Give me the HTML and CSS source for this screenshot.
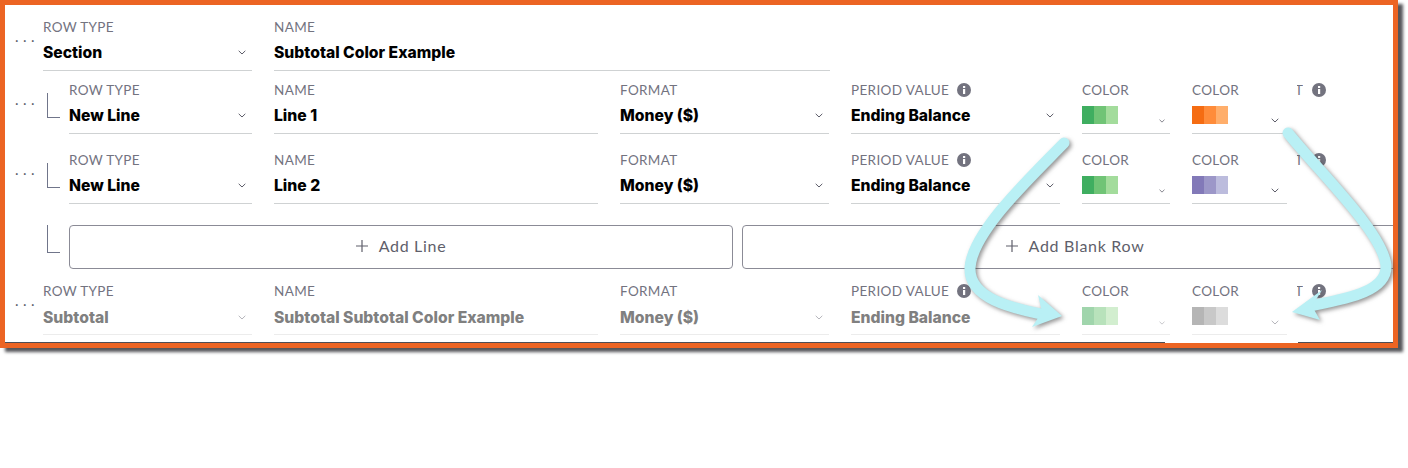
FILE: index.html
```html
<!DOCTYPE html>
<html lang="en">
<head>
<meta charset="utf-8">
<title>Subtotal Color Example</title>
<link rel="stylesheet" href="styles.css">
</head>
<body>
<svg width="0" height="0" class="defs" aria-hidden="true">
  <symbol id="chev" viewBox="0 0 8 5"><path d="M.7.8 4 4 7.3.8" fill="none" stroke="currentColor" stroke-width="1"/></symbol>
  <symbol id="info" viewBox="0 0 14 14"><circle cx="7" cy="7" r="7" fill="#73737f"/><rect x="6" y="6" width="2.2" height="5" fill="#fff"/><rect x="6" y="3" width="2.2" height="2" fill="#fff"/></symbol>
</svg>
<main class="frame">
  <section class="row row-first">
    <div class="handle">...</div>
    <div class="field type type-wide"><span class="label">ROW TYPE</span><div class="value"><b>Section</b><svg class="chev"><use href="#chev"/></svg></div></div>
    <div class="field name-wide"><span class="label">NAME</span><div class="value"><b>Subtotal Color Example</b></div></div>
  </section>
  <section class="row row-second">
    <div class="handle">...</div><div class="tree"></div>
    <div class="field type"><span class="label">ROW TYPE</span><div class="value"><b>New Line</b><svg class="chev"><use href="#chev"/></svg></div></div>
    <div class="field name"><span class="label">NAME</span><div class="value"><b>Line 1</b></div></div>
    <div class="field format"><span class="label">FORMAT</span><div class="value"><b>Money ($)</b><svg class="chev"><use href="#chev"/></svg></div></div>
    <div class="field period"><span class="label">PERIOD VALUE <svg class="info"><use href="#info"/></svg></span><div class="value"><b>Ending Balance</b><svg class="chev"><use href="#chev"/></svg></div></div>
    <div class="field color-a"><span class="label">COLOR</span><div class="value"><i class="swatch"><u class="g1"></u><u class="g2"></u><u class="g3"></u></i><svg class="chev chev-tiny"><use href="#chev"/></svg></div></div>
    <div class="field color-b"><span class="label">COLOR</span><div class="value"><i class="swatch"><u class="o1"></u><u class="o2"></u><u class="o3"></u></i><svg class="chev chev-low"><use href="#chev"/></svg></div></div>
    <div class="cut"><span class="cut-t">T</span><svg class="info"><use href="#info"/></svg></div>
  </section>
  <section class="row row-third">
    <div class="handle">...</div><div class="tree"></div>
    <div class="field type"><span class="label">ROW TYPE</span><div class="value"><b>New Line</b><svg class="chev"><use href="#chev"/></svg></div></div>
    <div class="field name"><span class="label">NAME</span><div class="value"><b>Line 2</b></div></div>
    <div class="field format"><span class="label">FORMAT</span><div class="value"><b>Money ($)</b><svg class="chev"><use href="#chev"/></svg></div></div>
    <div class="field period"><span class="label">PERIOD VALUE <svg class="info"><use href="#info"/></svg></span><div class="value"><b>Ending Balance</b><svg class="chev"><use href="#chev"/></svg></div></div>
    <div class="field color-a"><span class="label">COLOR</span><div class="value"><i class="swatch"><u class="g1"></u><u class="g2"></u><u class="g3"></u></i><svg class="chev chev-tiny"><use href="#chev"/></svg></div></div>
    <div class="field color-b"><span class="label">COLOR</span><div class="value"><i class="swatch"><u class="p1"></u><u class="p2"></u><u class="p3"></u></i><svg class="chev chev-low"><use href="#chev"/></svg></div></div>
    <div class="cut"><span class="cut-t">T</span><svg class="info"><use href="#info"/></svg></div>
  </section>
  <section class="row row-buttons">
    <div class="tree tree-btn"></div>
    <button class="add add-line"><svg class="plus" viewBox="0 0 12 12"><path d="M6 0v12M0 6h12" stroke="#5f5f6b" stroke-width="1.2"/></svg>Add Line</button>
    <button class="add add-blank"><svg class="plus" viewBox="0 0 12 12"><path d="M6 0v12M0 6h12" stroke="#5f5f6b" stroke-width="1.2"/></svg>Add Blank Row</button>
  </section>
  <section class="row row-last muted">
    <div class="handle">...</div>
    <div class="field type type-wide"><span class="label">ROW TYPE</span><div class="value"><b>Subtotal</b><svg class="chev"><use href="#chev"/></svg></div></div>
    <div class="field name"><span class="label">NAME</span><div class="value"><b>Subtotal Subtotal Color Example</b></div></div>
    <div class="field format"><span class="label">FORMAT</span><div class="value"><b>Money ($)</b><svg class="chev"><use href="#chev"/></svg></div></div>
    <div class="field period"><span class="label">PERIOD VALUE <svg class="info"><use href="#info"/></svg></span><div class="value"><b>Ending Balance</b></div></div>
    <div class="field color-a"><span class="label">COLOR</span><div class="value"><i class="swatch"><u class="mg1"></u><u class="mg2"></u><u class="mg3"></u></i><svg class="chev chev-tiny"><use href="#chev"/></svg></div></div>
    <div class="field color-b"><span class="label">COLOR</span><div class="value"><i class="swatch"><u class="k1"></u><u class="k2"></u><u class="k3"></u></i><svg class="chev chev-low"><use href="#chev"/></svg></div></div>
    <div class="cut"><span class="cut-t">T</span><svg class="info"><use href="#info"/></svg></div>
  </section>
  <div class="edge"><span class="edge-notch"></span></div>
  <svg class="arrows" viewBox="0 0 1408 468" width="1408" height="468" aria-hidden="true">
    <g class="arrow">
      <path d="M1064 143C1030 178 972 232 970 268C969 298 1010 308 1046 315" fill="none" stroke="#b9f0f5" stroke-width="11" stroke-linecap="round"/>
      <path d="M1062 316 1038 295 1042 312 1032 327Z" fill="#b9f0f5"/>
    </g>
    <g class="arrow">
      <path d="M1288 133C1322 175 1382 232 1386 265C1388 292 1345 299 1310 306" fill="none" stroke="#b9f0f5" stroke-width="11" stroke-linecap="round"/>
      <path d="M1292 312 1322 290 1312 306 1320 320Z" fill="#b9f0f5"/>
    </g>
  </svg>
</main>
</body>
</html>
```
FILE: styles.css
```css
* { box-sizing: border-box; }
html, body { margin: 0; padding: 0; background: #fff; }
body { height: 468px; overflow: hidden; font-family: "Lato", "Liberation Sans", sans-serif; }
.defs { position: absolute; }

.frame {
  position: relative;
  width: 1398px;
  height: 348px;
  border: 5px solid #ec6423;
  background: #fff;
  box-shadow: 5px 4px 3px #55565a;
  padding-top: 13px;
}

.row { display: flex; align-items: flex-start; padding-left: 10px; height: 53px; }
.row-second { margin-top: 10px; }
.row-third { margin-top: 17px; }
.row-buttons { margin-top: 21px; height: 44px; overflow: hidden; width: 1388px; }
.row-last { margin-top: 13px; }

.handle {
  width: 28px;
  flex: none;
  padding-top: 8px;
  font-size: 15px;
  line-height: 20px;
  letter-spacing: 4.4px;
  white-space: nowrap;
  color: #5e5e6a;
  font-weight: 400;
}
.tree {
  flex: none;
  width: 13px;
  height: 25px;
  margin: 12px 9px 0 4px;
  border-left: 1px solid #70758a;
  border-bottom: 1px solid #70758a;
}
.tree-btn { margin-left: 32px; margin-top: 0; height: 28px; }

.field { flex: none; margin-right: 22px; border-bottom: 1px solid #cfd2d3; height: 53px; }
.type { width: 183px; }
.type-wide { width: 209px; }
.name { width: 324px; }
.name-wide { width: 556px; }
.format { width: 209px; }
.period { width: 209px; }
.color-a { width: 88px; }
.color-b { width: 95px; margin-right: 10px; }

.label {
  display: flex;
  align-items: center;
  gap: 8px;
  height: 18px;
  font-size: 13.5px;
  line-height: 18px;
  letter-spacing: .35px;
  color: #73737f;
}
.value {
  position: relative;
  display: flex;
  justify-content: space-between;
  align-items: center;
  height: 35px;
  padding: 0 6px 2px 0;
}
.muted .value { padding-bottom: 0; }
.value b { font-family: "Inter", "Lato", sans-serif; font-size: 15.7px; font-weight: 800; color: #000; letter-spacing: 0; white-space: nowrap; }

.chev { display: block; width: 8px; height: 5px; color: #5c5c68; flex: none; }
.chev-tiny { width: 6px; height: 4px; margin-top: 10px; margin-right: -1px; }
.chev-low { margin-top: 10px; margin-right: 2px; }

.info { display: block; width: 14px; height: 14px; flex: none; }

.swatch { display: flex; align-self: flex-start; margin-top: 7px; }
.swatch u { display: block; width: 12px; height: 18px; }
.g1 { background: #3fae60; } .g2 { background: #70c476; } .g3 { background: #a3dc9c; }
.o1 { background: #f56c12; } .o2 { background: #ff8c3a; } .o3 { background: #ffae6b; }
.p1 { background: #8279b8; } .p2 { background: #9c97c8; } .p3 { background: #bcbcdd; }
.mg1 { background: #a0d5ac; } .mg2 { background: #b8e2bb; } .mg3 { background: #d2eecf; }
.k1 { background: #b5b5b5; } .k2 { background: #c8c8c8; } .k3 { background: #dcdcdc; }

.cut { display: flex; align-items: center; height: 18px; }
.cut-t {
  width: 6px;
  margin-right: 9px;
  overflow: hidden;
  font-size: 13.5px;
  line-height: 18px;
  color: #73737f;
  text-indent: -2px;
}

.add {
  flex: none;
  display: flex;
  align-items: center;
  justify-content: center;
  gap: 11px;
  height: 44px;
  border: 1px solid #8b8b96;
  border-radius: 4px;
  background: #fff;
  font: 400 16px/1 "Lato", "Liberation Sans", sans-serif;
  letter-spacing: .7px;
  color: #5f5f6b;
  padding: 0 0 2px;
}
.add-line { width: 664px; margin-right: 9px; }
.add-blank { width: 686px; margin-right: 0; padding-right: 20px; }
.plus { width: 12px; height: 12px; display: block; }

.muted .field { border-bottom-color: #ececec; }
.muted .value b { color: #808080; }
.muted .chev { color: #b5b5bb; }

.edge {
  position: absolute;
  left: 0;
  right: 0;
  bottom: 0;
  height: 1px;
  background: #4b4d55;
}
.edge-notch { position: absolute; left: 1160px; width: 133px; top: 0; height: 1px; background: #fff; }

.arrows { position: absolute; left: -5px; top: -5px; overflow: visible; pointer-events: none; }
.arrow { filter: drop-shadow(2px 2px 2px rgba(60, 60, 60, .55)); }
```
